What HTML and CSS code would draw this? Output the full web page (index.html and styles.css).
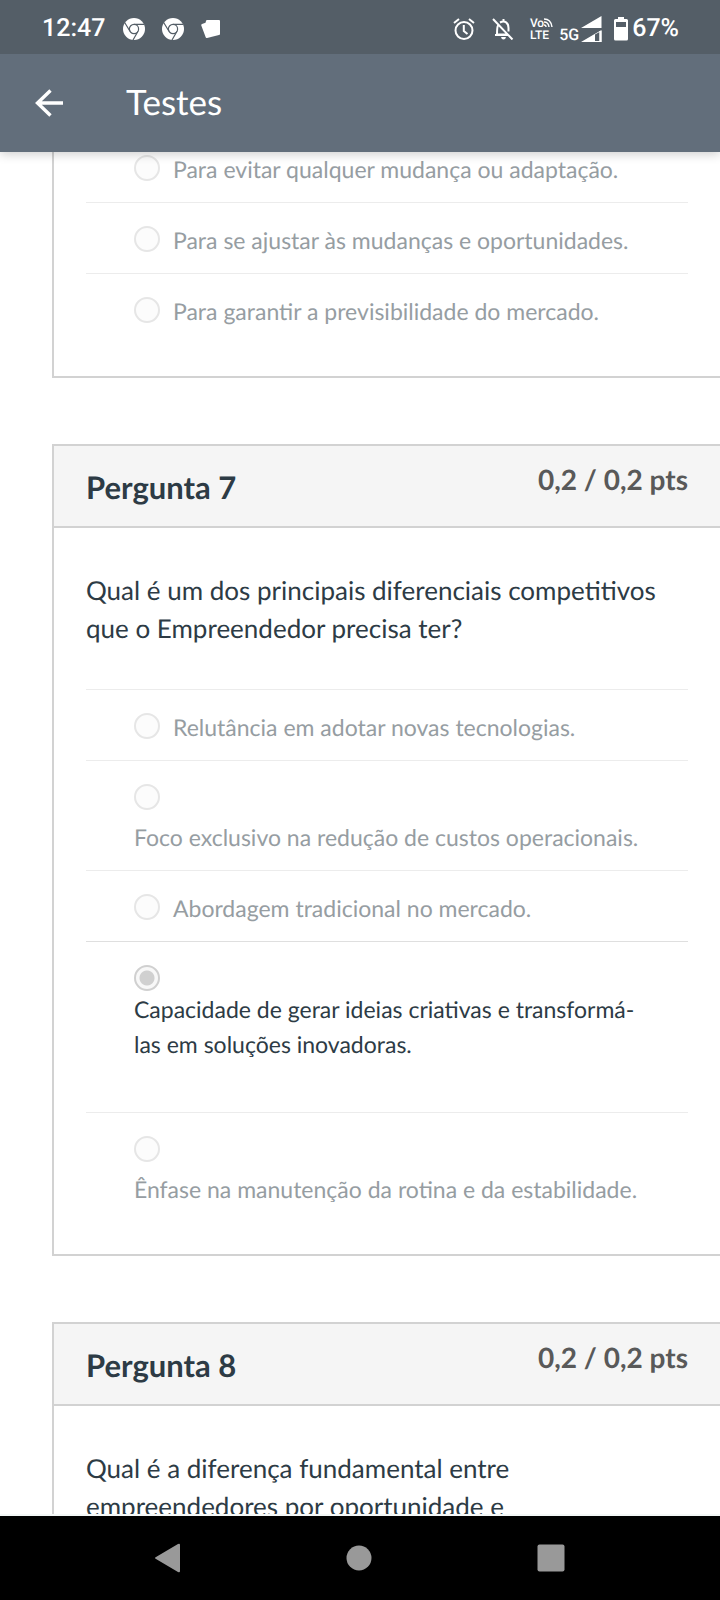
FILE: index.html
```html
<!DOCTYPE html>
<html lang="pt-BR">
<head>
    <meta charset="UTF-8">
    <meta name="viewport" content="width=device-width, initial-scale=1">
    <title>Testes</title>
    <link rel="stylesheet" href="styles.css">
</head>
<body>
<div class="status-bar">
    <span class="clock">12:47</span>
    <div class="notices">
        <svg class="chrome" viewBox="0 0 22 22">
            <circle cx="11" cy="11" r="11" fill="#fff"/>
            <g fill="none" stroke="#545e67" stroke-width="1.200">
                <circle cx="11" cy="11" r="4.6"/>
                <path d="M11 6.400H21M7 13.300L1.800 4.800M15 13.300L10 22"/>
            </g>
        </svg>
        <svg class="chrome" viewBox="0 0 22 22">
            <circle cx="11" cy="11" r="11" fill="#fff"/>
            <g fill="none" stroke="#545e67" stroke-width="1.200">
                <circle cx="11" cy="11" r="4.6"/>
                <path d="M11 6.400H21M7 13.300L1.800 4.800M15 13.300L10 22"/>
            </g>
        </svg>
        <svg class="cards" viewBox="0 0 20 18">
            <path fill="#fff" d="M6 0H18Q19 0 19 1V14Q19 15 18 15L6 18Q5 18.200 4.600 17L0.300 5.500Q0 4.500 1 4L4.500 2.800L5 1Q5.200 0 6 0Z"/>
        </svg>
    </div>
    <div class="signals">
        <svg class="alarm" viewBox="0 0 22 22" fill="none" stroke="#fff" stroke-width="2">
            <circle cx="11" cy="12.500" r="8.500"/>
            <path d="M10.800 7V13L14.500 16M1 5L6 1M21 5L16 1"/>
        </svg>
        <svg class="bell" viewBox="0 0 22 22" fill="none" stroke="#fff" stroke-width="2">
            <path d="M1 1L20.500 21.500M6 7.500C5 9 5 10 5 16.500H16M3 17H16M8 4.500C13 2 16.500 5 16.500 10V13.500M11.500 1V4"/>
            <path fill="#fff" stroke="none" d="M9 19H14Q13.500 21.500 11.500 21.500T9 19Z"/>
        </svg>
        <div class="volte">
            <span>Vo<svg viewBox="0 0 9 9" fill="none" stroke="#fff" stroke-width="1.400"><path d="M0 1Q7 1 8 9M0 4Q4.500 4 5 9M0 7Q2 7 2 9"/></svg></span>
            <span>LTE</span>
        </div>
        <span class="network">5G</span>
        <svg class="bars" viewBox="0 0 21 26">
            <path fill="#fff" d="M20.500 0V12H0ZM20.500 14V26H0Z"/>
            <path fill="#545e67" d="M14 18.500L18.500 16V25H14Z"/>
            <path fill="#fff" d="M18.500 15H20.500V26H18.500Z"/>
        </svg>
        <svg class="battery" viewBox="0 0 14 24">
            <path fill="#fff" d="M4 0H10V2H12.500Q14 2 14 3.500V22Q14 23.500 12.500 23.500H1.500Q0 23.500 0 22V3.500Q0 2 1.500 2H4Z"/>
            <path fill="#545e67" d="M2 5H12V10H2Z"/>
        </svg>
        <span class="percent">67%</span>
    </div>
</div>
<header class="toolbar">
    <button class="back" type="button" aria-label="Voltar">
        <svg viewBox="0 0 28 28" fill="none" stroke="#fff" stroke-width="3.400"><path d="M28 14H3M15.500 1.500L2.500 14L15.500 26.500"/></svg>
    </button>
    <h1>Testes</h1>
</header>
<main class="quiz">
    <section class="question scrolled">
        <ul class="answers">
            <li>
                <input type="radio" name="q6" id="q6a" disabled>
                <label for="q6a">Para evitar qualquer mudança ou adaptação.</label>
            </li>
            <li>
                <input type="radio" name="q6" id="q6b" disabled>
                <label for="q6b">Para se ajustar às mudanças e oportunidades.</label>
            </li>
            <li>
                <input type="radio" name="q6" id="q6c" disabled>
                <label for="q6c">Para garantir a previsibilidade do mercado.</label>
            </li>
        </ul>
    </section>
    <section class="question">
        <div class="question-header">
            <h2>Pergunta 7</h2>
            <span class="points">0,2 / 0,2 pts</span>
        </div>
        <p class="question-text">Qual é um dos principais diferenciais competitivos que o Empreendedor precisa ter?</p>
        <ul class="answers">
            <li>
                <input type="radio" name="q7" id="q7a" disabled>
                <label for="q7a">Relutância em adotar novas tecnologias.</label>
            </li>
            <li class="stacked">
                <input type="radio" name="q7" id="q7b" disabled>
                <label for="q7b">Foco exclusivo na redução de custos operacionais.</label>
            </li>
            <li>
                <input type="radio" name="q7" id="q7c" disabled>
                <label for="q7c">Abordagem tradicional no mercado.</label>
            </li>
            <li class="stacked selected">
                <input type="radio" name="q7" id="q7d" checked disabled>
                <label for="q7d">Capacidade de gerar ideias criativas e transformá-las em soluções inovadoras.</label>
            </li>
            <li class="stacked">
                <input type="radio" name="q7" id="q7e" disabled>
                <label for="q7e">Ênfase na manutenção da rotina e da estabilidade.</label>
            </li>
        </ul>
    </section>
    <section class="question">
        <div class="question-header">
            <h2>Pergunta 8</h2>
            <span class="points">0,2 / 0,2 pts</span>
        </div>
        <p class="question-text">Qual é a diferença fundamental entre<br>empreendedores por oportunidade e</p>
    </section>
</main>
<nav class="nav-bar">
    <button type="button" aria-label="Voltar">
        <svg viewBox="0 0 28 30"><path fill="#999" d="M25 1Q27 0 27 2V28Q27 30 25 29L3 16Q1 15 3 14Z"/></svg>
    </button>
    <button type="button" aria-label="Início">
        <svg viewBox="0 0 28 30"><circle fill="#999" cx="14" cy="15" r="12.500"/></svg>
    </button>
    <button type="button" aria-label="Recentes">
        <svg viewBox="0 0 28 30"><rect fill="#999" x="0.500" y="1.500" width="27" height="27" rx="2"/></svg>
    </button>
</nav>
</body>
</html>
```
FILE: styles.css
```css
* {
    box-sizing: border-box;
}

body, h1, h2, p, ul {
    margin: 0;
    padding: 0;
}

body {
    display: flex;
    flex-direction: column;
    height: 100vh;
    overflow: hidden;
    background-color: #fff;
    color: #2d3b45;
    font-family: Lato, sans-serif;
    text-rendering: geometricPrecision;
}

button {
    display: flex;
    padding: 0;
    border: 0;
    background: none;
}

/* status bar */
.status-bar {
    display: flex;
    flex: none;
    align-items: center;
    position: relative;
    z-index: 2;
    height: 54px;
    padding: 3px 41px 0 42px;
    background-color: #545e67;
    color: #fff;
    font: 500 25px/30px Roboto, sans-serif;
}

.notices {
    display: flex;
    align-items: center;
    gap: 17px;
    margin-left: 18px;
}

.chrome, .alarm, .bell {
    width: 22px;
    height: 22px;
}

.cards {
    width: 20px;
    height: 18px;
}

.signals {
    display: flex;
    align-items: center;
    margin-left: auto;
}

.bell {
    margin-left: 17px;
}

.volte {
    display: flex;
    flex-direction: column;
    margin: 0 6px 0 16px;
    font-size: 12px;
    line-height: 12px;
}

.volte svg {
    width: 9px;
    height: 9px;
}

.network {
    align-self: flex-end;
    font-size: 16px;
    line-height: 18px;
}

.bars {
    width: 21px;
    height: 26px;
    margin-left: 2px;
}

.battery {
    width: 14px;
    height: 24px;
    margin: 0 4px 0 12px;
}

/* toolbar */
.toolbar {
    display: flex;
    flex: none;
    align-items: center;
    gap: 63px;
    position: relative;
    z-index: 1;
    height: 98px;
    padding: 0 35px;
    background-color: #626e7b;
    box-shadow: 0 2px 10px rgba(0, 0, 0, 0.2);
}

.toolbar h1 {
    padding-bottom: 2px;
    color: #fff;
    font-size: 35px;
    font-weight: 400;
    line-height: 42px;
}

.back svg {
    width: 28px;
    height: 28px;
}

/* questions */
.quiz {
    flex: 1;
    min-height: 0;
    overflow: hidden;
    padding-left: 52px;
}

.question {
    margin-bottom: 66px;
    padding-bottom: 32px;
    border: 2px solid #d2d2d2;
    border-right: 0;
}

.question.scrolled {
    border-top: 0;
}

.question.scrolled .answers {
    margin-top: -21px;
}

.question-header {
    display: flex;
    justify-content: space-between;
    height: 82px;
    padding: 14px 32px 0;
    border-bottom: 2px solid #d2d2d2;
    background-color: #f5f5f5;
}

.question-header h2 {
    padding-top: 8px;
    font-size: 31px;
    line-height: 38px;
}

.points {
    color: #595959;
    font-size: 28px;
    font-weight: 700;
    line-height: 38px;
}

.question-text {
    padding: 43px 32px 42px;
    font-size: 26px;
    line-height: 38px;
}

.answers {
    margin: 0 32px;
    list-style: none;
}

.answers li {
    display: flex;
    align-items: flex-start;
    gap: 13px;
    padding: 20px 48px 15px;
    border-top: 1px solid #ececec;
    color: #969da2;
    font-size: 23px;
    line-height: 35px;
}

.answers li.stacked {
    flex-direction: column;
    gap: 10px;
}

.answers li.selected {
    gap: 1px;
    padding-bottom: 50px;
    border-color: #dfdfdf;
    color: #2d3b45;
}

.answers input {
    appearance: none;
    flex: none;
    width: 26px;
    height: 26px;
    margin: 3px 0 0;
    border: 2px solid #e6e6e6;
    border-radius: 50%;
    background-color: #fcfcfc;
}

.answers input:checked {
    border-color: #d0d0d0;
    background: radial-gradient(circle, #d0d0d0 7px, #f8f8f8 8px);
}

/* navigation bar */
.nav-bar {
    display: flex;
    flex: none;
    align-items: center;
    justify-content: space-around;
    height: 86px;
    padding: 0 73px 0 71px;
    border-top: 2px solid #f4f8f7;
    background-color: #000;
}

.nav-bar svg {
    width: 28px;
    height: 30px;
}
```
